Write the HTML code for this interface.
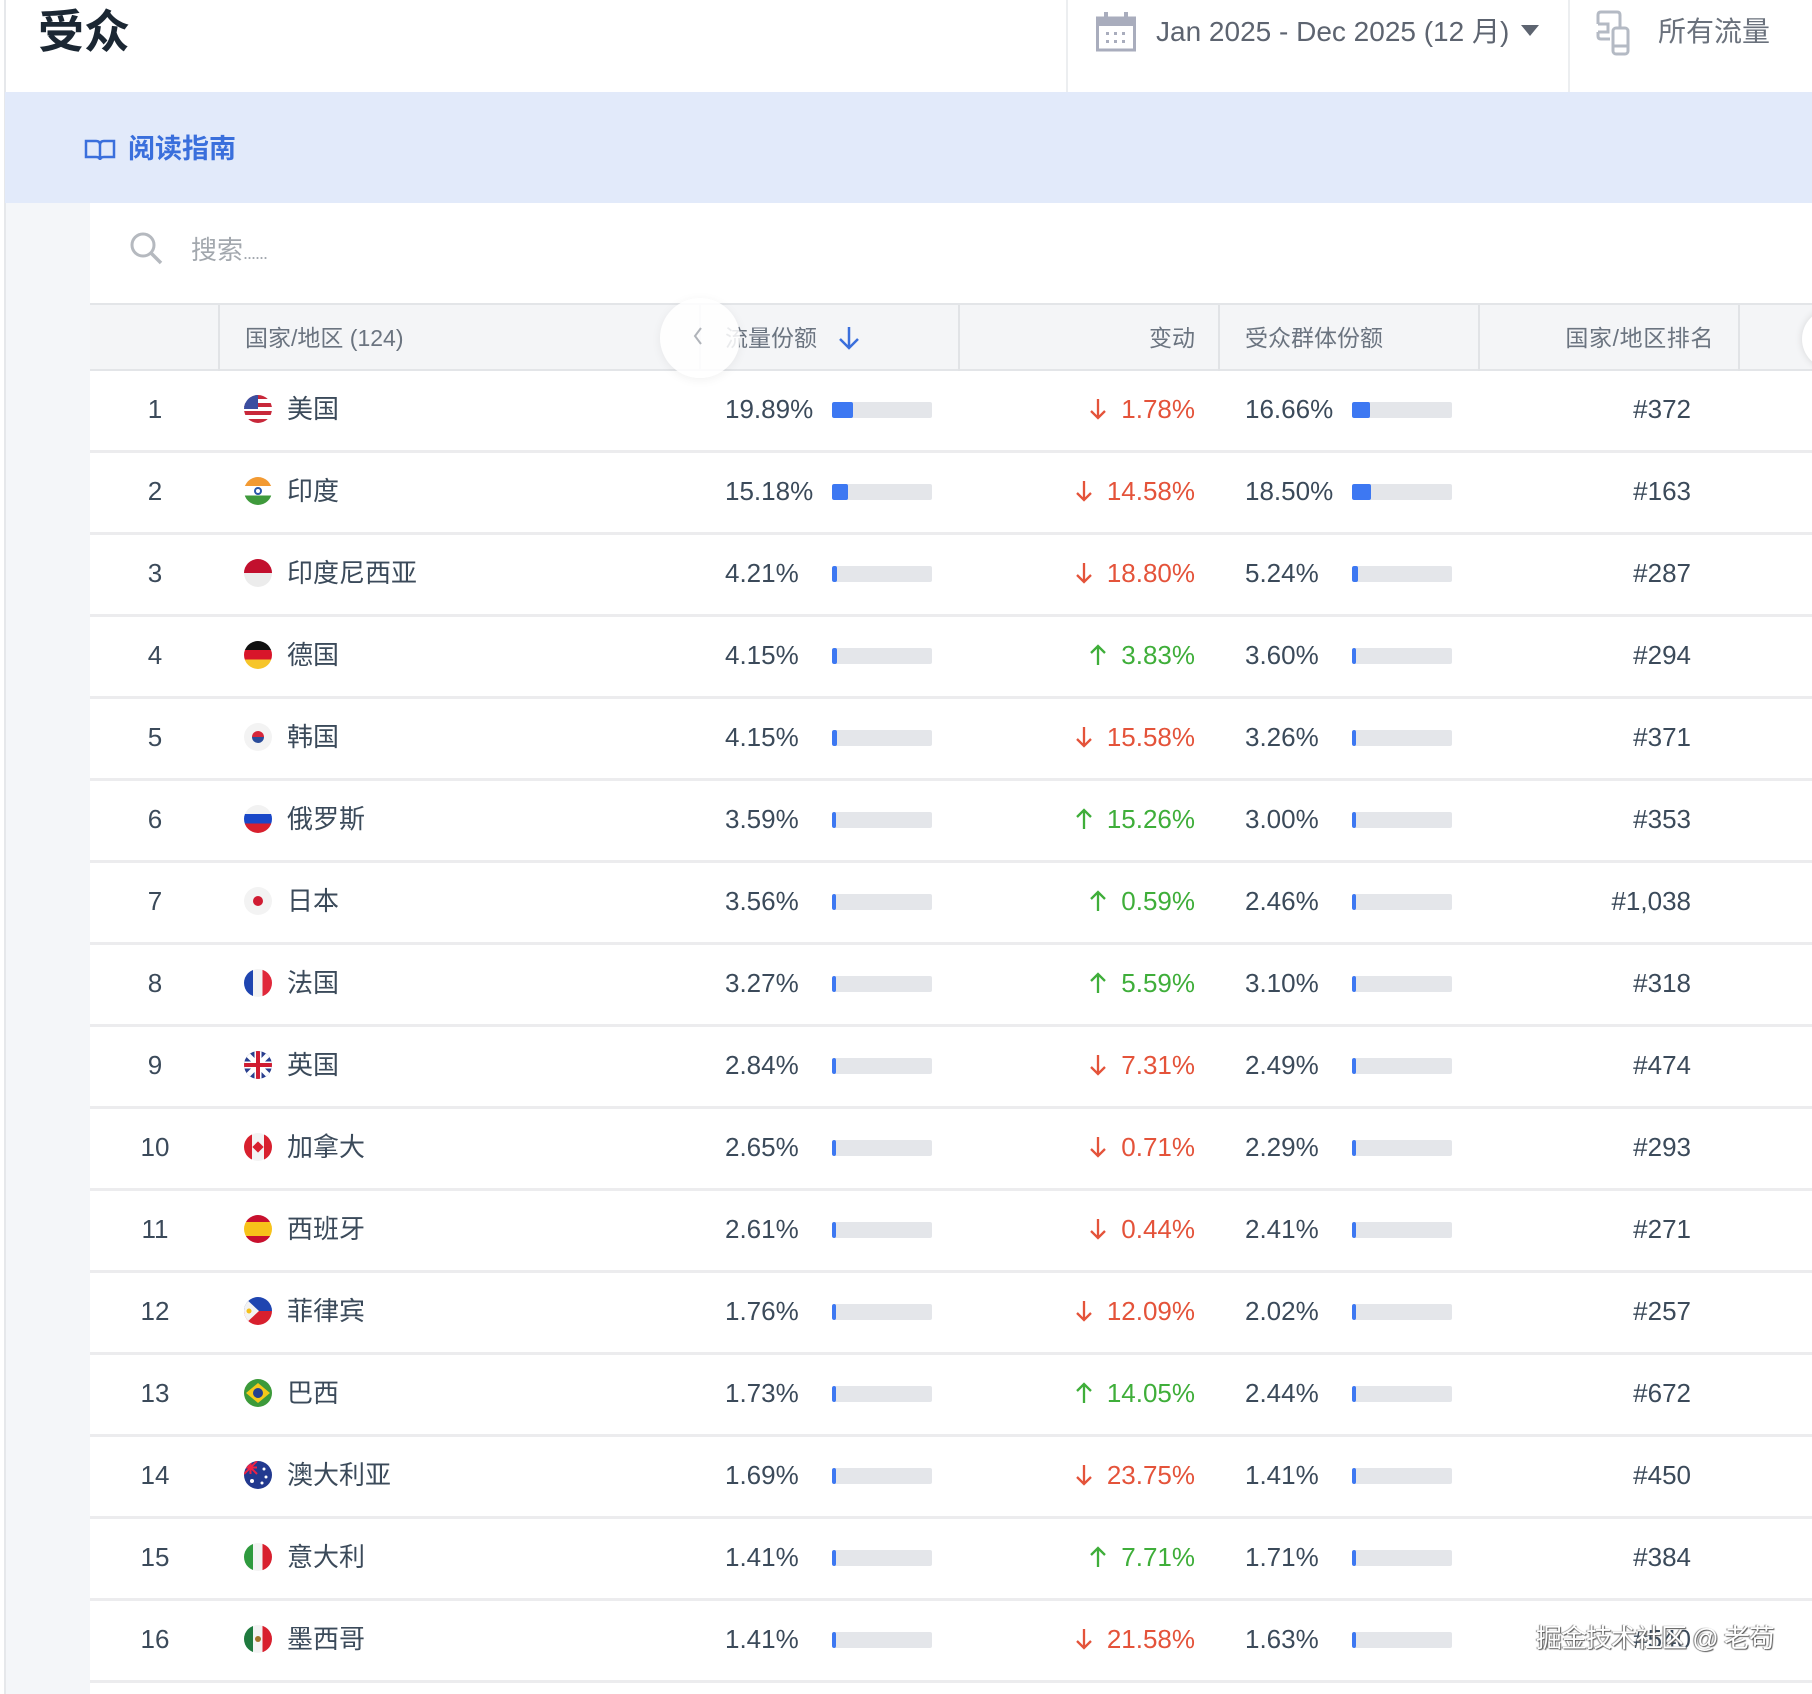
<!DOCTYPE html>
<html><head><meta charset="utf-8">
<style>
*{margin:0;padding:0;box-sizing:border-box}
body{width:1812px;height:1694px;background:#fff;font-family:"Liberation Sans","Noto Sans CJK SC",sans-serif;color:#3b4a5a;position:relative;overflow:hidden}
.a{position:absolute}
.row{position:absolute;left:90px;width:1722px;height:82px;border-bottom:3px solid #ececee}
.row>*{position:absolute;top:0;line-height:76px;font-size:26px;white-space:nowrap}
.rk{left:35px;width:60px;text-align:center}
.fl{left:154px;top:24px!important;width:28px;height:28px;border-radius:50%;overflow:hidden}
.nm{left:197px}
.p1{left:635px}
.b1,.b2{top:31px!important;width:100px;height:16px;background:#e4e6ea;border-radius:2px;overflow:hidden}
.b1{left:742px}.b2{left:1262px}
.b1 i,.b2 i{display:block;height:16px;background:#3d78f2;border-radius:2px}
.ch{right:617px;text-align:right}
.ch svg{display:inline-block;vertical-align:-3px;margin-right:14px}
.dn{color:#e4533a}.up{color:#3fae3a}
.p2{left:1155px}
.rn{right:121px;text-align:right}
.hd{position:absolute;top:0;height:66px;line-height:66px;font-size:23px;color:#6b7480}
.sep{position:absolute;top:0;width:2px;height:66px;background:#e1e3e6}
</style></head><body>
<svg width="0" height="0" style="position:absolute"><defs>
<symbol id="d" viewBox="0 0 18 24"><path d="M9 2V21M2 14L9 21L16 14" fill="none" stroke="#e4533a" stroke-width="2.3"/></symbol>
<symbol id="u" viewBox="0 0 18 24"><path d="M9 22V3M2 10L9 3L16 10" fill="none" stroke="#3fae3a" stroke-width="2.3"/></symbol>
</defs></svg>
<div class="a" style="left:4px;top:0;width:2px;height:1694px;background:#e6e8eb"></div>
<div class="a" style="left:38px;top:2px;font-size:46px;font-weight:bold;color:#1b2733;line-height:60px">受众</div>
<div class="a" style="left:1066px;top:0;width:2px;height:92px;background:#eceef0"></div>
<div class="a" style="left:1568px;top:0;width:2px;height:92px;background:#eceef0"></div>
<svg class="a" style="left:1096px;top:12px" width="40" height="40" viewBox="0 0 40 40"><rect x="1.5" y="6" width="37" height="32" fill="none" stroke="#a9adbd" stroke-width="3"/><rect x="1.5" y="6" width="37" height="8" fill="#a9adbd"/><rect x="8" y="0" width="4" height="8" fill="#a9adbd"/><rect x="28" y="0" width="4" height="8" fill="#a9adbd"/><g fill="#a9adbd"><rect x="10" y="20" width="3" height="3"/><rect x="18" y="20" width="3" height="3"/><rect x="26" y="20" width="3" height="3"/><rect x="10" y="28" width="3" height="3"/><rect x="18" y="28" width="3" height="3"/><rect x="26" y="28" width="3" height="3"/></g></svg>
<div class="a" style="left:1156px;top:12px;font-size:28px;color:#5d6470;line-height:40px">Jan 2025 - Dec 2025 (12 月)</div>
<svg class="a" style="left:1520px;top:24px" width="20" height="14"><path d="M1 1H19L10 12Z" fill="#5d6470"/></svg>
<svg class="a" style="left:1596px;top:10px" width="46" height="46" viewBox="0 0 46 46"><path d="M24 17V5Q24 2 21 2H5Q2 2 2 5V14M2 22V26Q2 29 5 29H14M2 14H12V22H2" fill="none" stroke="#b4bac4" stroke-width="3"/><rect x="17" y="18" width="15" height="26" rx="3" fill="none" stroke="#b4bac4" stroke-width="3"/><line x1="18" y1="36" x2="31" y2="36" stroke="#b4bac4" stroke-width="3"/></svg>
<div class="a" style="left:1658px;top:12px;font-size:28px;color:#6a717c;line-height:40px">所有流量</div>
<div class="a" style="left:5px;top:92px;width:1807px;height:111px;background:#e2eafa"></div>
<svg class="a" style="left:84px;top:138px" width="32" height="24" viewBox="0 0 32 24"><path d="M2 3H12Q16 3 16 7V22Q16 19 12 19H2ZM30 3H20Q16 3 16 7V22Q16 19 20 19H30Z" fill="none" stroke="#3a6fdc" stroke-width="2.5"/></svg>
<div class="a" style="left:128px;top:131px;font-size:27px;color:#3a6fdc;font-weight:bold;line-height:36px">阅读指南</div>
<div class="a" style="left:6px;top:203px;width:84px;height:1491px;background:#f4f6f9"></div>
<svg class="a" style="left:128px;top:230px" width="38" height="38" viewBox="0 0 38 38"><circle cx="15" cy="15" r="11" fill="none" stroke="#b5b9bf" stroke-width="3"/><line x1="23" y1="23" x2="33" y2="33" stroke="#b5b9bf" stroke-width="3.5"/></svg>
<div class="a" style="left:191px;top:232px;font-size:26px;color:#a3a8ae;line-height:36px">搜索<span style="font-size:18px;letter-spacing:-1px">......</span></div>
<div class="a" style="left:90px;top:303px;width:1722px;height:68px;background:#f4f5f7;border-top:2px solid #e3e5e8;border-bottom:2px solid #e3e5e8">
 <div class="sep" style="left:128px"></div>
 <div class="sep" style="left:609px"></div>
 <div class="sep" style="left:868px"></div>
 <div class="sep" style="left:1128px"></div>
 <div class="sep" style="left:1388px"></div>
 <div class="sep" style="left:1648px"></div>
 <div class="hd" style="left:155px">国家/地区 (124)</div>
 <div class="hd" style="left:635px">流量份额</div>
 <svg class="a" style="left:748px;top:20px" width="22" height="26" viewBox="0 0 22 26"><path d="M11 2V23M2 14L11 23L20 14" fill="none" stroke="#3a6fdc" stroke-width="2.5"/></svg>
 <div class="hd" style="right:617px">变动</div>
 <div class="hd" style="left:1155px">受众群体份额</div>
 <div class="hd" style="right:98px;letter-spacing:0.6px">国家/地区排名</div>
 <div class="a" style="left:1712px;top:4px;width:60px;height:60px;border-radius:50%;background:#fff;box-shadow:0 0 8px rgba(0,0,0,.12)"></div>
</div>
<div class="a" style="left:660px;top:298px;width:80px;height:80px;border-radius:50%;background:rgba(255,255,255,.85);box-shadow:0 2px 10px rgba(0,0,0,.06)"></div>
<svg class="a" style="left:692px;top:326px" width="12" height="20"><path d="M9 2L3 10L9 18" fill="none" stroke="#b0b4ba" stroke-width="2"/></svg>

<div class="row" style="top:371px"><span class="rk">1</span><span class="fl" style="background:repeating-linear-gradient(#c8283a 0 4px,#fff 4px 8px)"><i style="position:absolute;left:0;top:0;width:14px;height:14px;background:#3b4ea0"></i></span><span class="nm">美国</span><span class="p1">19.89%</span><span class="b1"><i style="width:21px"></i></span><span class="ch dn"><svg width="18" height="24"><use href="#d"/></svg>1.78%</span><span class="p2">16.66%</span><span class="b2"><i style="width:18px"></i></span><span class="rn">#372</span></div>
<div class="row" style="top:453px"><span class="rk">2</span><span class="fl" style="background:linear-gradient(#f29a33 0 33%,#fff 33% 66%,#3f9a3c 66%)"><i style="position:absolute;left:10px;top:10px;width:8px;height:8px;border-radius:50%;border:2px solid #2a57a8"></i></span><span class="nm">印度</span><span class="p1">15.18%</span><span class="b1"><i style="width:16px"></i></span><span class="ch dn"><svg width="18" height="24"><use href="#d"/></svg>14.58%</span><span class="p2">18.50%</span><span class="b2"><i style="width:19px"></i></span><span class="rn">#163</span></div>
<div class="row" style="top:535px"><span class="rk">3</span><span class="fl" style="background:linear-gradient(#c2102e 0 50%,#ececec 50%)"></span><span class="nm">印度尼西亚</span><span class="p1">4.21%</span><span class="b1"><i style="width:5px"></i></span><span class="ch dn"><svg width="18" height="24"><use href="#d"/></svg>18.80%</span><span class="p2">5.24%</span><span class="b2"><i style="width:6px"></i></span><span class="rn">#287</span></div>
<div class="row" style="top:617px"><span class="rk">4</span><span class="fl" style="background:linear-gradient(#111 0 33%,#d8152a 33% 66%,#f6c52a 66%)"></span><span class="nm">德国</span><span class="p1">4.15%</span><span class="b1"><i style="width:5px"></i></span><span class="ch up"><svg width="18" height="24"><use href="#u"/></svg>3.83%</span><span class="p2">3.60%</span><span class="b2"><i style="width:4px"></i></span><span class="rn">#294</span></div>
<div class="row" style="top:699px"><span class="rk">5</span><span class="fl" style="background:#f3f3f3"><i style="position:absolute;left:8px;top:8px;width:12px;height:12px;border-radius:50%;background:linear-gradient(#d7263a 50%,#2a4c9a 50%)"></i></span><span class="nm">韩国</span><span class="p1">4.15%</span><span class="b1"><i style="width:5px"></i></span><span class="ch dn"><svg width="18" height="24"><use href="#d"/></svg>15.58%</span><span class="p2">3.26%</span><span class="b2"><i style="width:4px"></i></span><span class="rn">#371</span></div>
<div class="row" style="top:781px"><span class="rk">6</span><span class="fl" style="background:linear-gradient(#f2f2f2 0 33%,#1a48c8 33% 66%,#d8202e 66%)"></span><span class="nm">俄罗斯</span><span class="p1">3.59%</span><span class="b1"><i style="width:4px"></i></span><span class="ch up"><svg width="18" height="24"><use href="#u"/></svg>15.26%</span><span class="p2">3.00%</span><span class="b2"><i style="width:4px"></i></span><span class="rn">#353</span></div>
<div class="row" style="top:863px"><span class="rk">7</span><span class="fl" style="background:#f3f3f3"><i style="position:absolute;left:9px;top:9px;width:10px;height:10px;border-radius:50%;background:#d01c32"></i></span><span class="nm">日本</span><span class="p1">3.56%</span><span class="b1"><i style="width:4px"></i></span><span class="ch up"><svg width="18" height="24"><use href="#u"/></svg>0.59%</span><span class="p2">2.46%</span><span class="b2"><i style="width:4px"></i></span><span class="rn">#1,038</span></div>
<div class="row" style="top:945px"><span class="rk">8</span><span class="fl" style="background:linear-gradient(90deg,#1f45b0 0 33%,#f3f3f3 33% 66%,#e0283a 66%)"></span><span class="nm">法国</span><span class="p1">3.27%</span><span class="b1"><i style="width:4px"></i></span><span class="ch up"><svg width="18" height="24"><use href="#u"/></svg>5.59%</span><span class="p2">3.10%</span><span class="b2"><i style="width:4px"></i></span><span class="rn">#318</span></div>
<div class="row" style="top:1027px"><span class="rk">9</span><span class="fl" style="background:#2a3f8f"><svg width="28" height="28" style="position:absolute;left:0;top:0"><path d="M0 0L28 28M28 0L0 28" stroke="#fff" stroke-width="5"/><path d="M14 0V28M0 14H28" stroke="#fff" stroke-width="7"/><path d="M14 0V28M0 14H28" stroke="#d01c32" stroke-width="4"/></svg></span><span class="nm">英国</span><span class="p1">2.84%</span><span class="b1"><i style="width:4px"></i></span><span class="ch dn"><svg width="18" height="24"><use href="#d"/></svg>7.31%</span><span class="p2">2.49%</span><span class="b2"><i style="width:4px"></i></span><span class="rn">#474</span></div>
<div class="row" style="top:1109px"><span class="rk">10</span><span class="fl" style="background:linear-gradient(90deg,#d8202e 0 28%,#f3f3f3 28% 72%,#d8202e 72%)"><i style="position:absolute;left:10px;top:10px;width:8px;height:8px;background:#d8202e;transform:rotate(45deg)"></i></span><span class="nm">加拿大</span><span class="p1">2.65%</span><span class="b1"><i style="width:4px"></i></span><span class="ch dn"><svg width="18" height="24"><use href="#d"/></svg>0.71%</span><span class="p2">2.29%</span><span class="b2"><i style="width:4px"></i></span><span class="rn">#293</span></div>
<div class="row" style="top:1191px"><span class="rk">11</span><span class="fl" style="background:linear-gradient(#c8102e 0 25%,#f7c21a 25% 75%,#c8102e 75%)"></span><span class="nm">西班牙</span><span class="p1">2.61%</span><span class="b1"><i style="width:4px"></i></span><span class="ch dn"><svg width="18" height="24"><use href="#d"/></svg>0.44%</span><span class="p2">2.41%</span><span class="b2"><i style="width:4px"></i></span><span class="rn">#271</span></div>
<div class="row" style="top:1273px"><span class="rk">12</span><span class="fl" style="background:linear-gradient(#1f45b0 50%,#d8202e 50%)"><svg width="28" height="28" style="position:absolute;left:0;top:0"><path d="M0 0L15 14L0 28Z" fill="#f3f3f3"/><circle cx="5" cy="14" r="2.5" fill="#f5c01a"/></svg></span><span class="nm">菲律宾</span><span class="p1">1.76%</span><span class="b1"><i style="width:4px"></i></span><span class="ch dn"><svg width="18" height="24"><use href="#d"/></svg>12.09%</span><span class="p2">2.02%</span><span class="b2"><i style="width:4px"></i></span><span class="rn">#257</span></div>
<div class="row" style="top:1355px"><span class="rk">13</span><span class="fl" style="background:#3c9a3a"><svg width="28" height="28" style="position:absolute;left:0;top:0"><path d="M14 4L26 14L14 24L2 14Z" fill="#f5c81a"/><circle cx="14" cy="14" r="5" fill="#243f8f"/></svg></span><span class="nm">巴西</span><span class="p1">1.73%</span><span class="b1"><i style="width:4px"></i></span><span class="ch up"><svg width="18" height="24"><use href="#u"/></svg>14.05%</span><span class="p2">2.44%</span><span class="b2"><i style="width:4px"></i></span><span class="rn">#672</span></div>
<div class="row" style="top:1437px"><span class="rk">14</span><span class="fl" style="background:#22398f"><svg width="28" height="28" style="position:absolute;left:0;top:0"><path d="M0 0L13 13M13 0L0 13M6.5 0V13M0 6.5H13" stroke="#e24" stroke-width="2"/><g fill="#fff"><circle cx="8" cy="20" r="2"/><circle cx="20" cy="8" r="1.5"/><circle cx="22" cy="16" r="1.5"/><circle cx="18" cy="22" r="1.5"/></g></svg></span><span class="nm">澳大利亚</span><span class="p1">1.69%</span><span class="b1"><i style="width:4px"></i></span><span class="ch dn"><svg width="18" height="24"><use href="#d"/></svg>23.75%</span><span class="p2">1.41%</span><span class="b2"><i style="width:4px"></i></span><span class="rn">#450</span></div>
<div class="row" style="top:1519px"><span class="rk">15</span><span class="fl" style="background:linear-gradient(90deg,#2f9a3e 0 33%,#f3f3f3 33% 66%,#d8202e 66%)"></span><span class="nm">意大利</span><span class="p1">1.41%</span><span class="b1"><i style="width:4px"></i></span><span class="ch up"><svg width="18" height="24"><use href="#u"/></svg>7.71%</span><span class="p2">1.71%</span><span class="b2"><i style="width:4px"></i></span><span class="rn">#384</span></div>
<div class="row" style="top:1601px"><span class="rk">16</span><span class="fl" style="background:linear-gradient(90deg,#1f7a3e 0 33%,#f3f3f3 33% 66%,#d8202e 66%)"><i style="position:absolute;left:11px;top:11px;width:6px;height:6px;border-radius:50%;background:#a0722a"></i></span><span class="nm">墨西哥</span><span class="p1">1.41%</span><span class="b1"><i style="width:4px"></i></span><span class="ch dn"><svg width="18" height="24"><use href="#d"/></svg>21.58%</span><span class="p2">1.63%</span><span class="b2"><i style="width:4px"></i></span><span class="rn">#540</span></div>
<div class="a" style="left:1536px;top:1620px;font-size:26px;color:#fff;line-height:36px;letter-spacing:-1px;text-shadow:1px 1px 1px #555,-1px 0 1px #777">掘金技术社区 @ 老苟</div>
</body></html>
